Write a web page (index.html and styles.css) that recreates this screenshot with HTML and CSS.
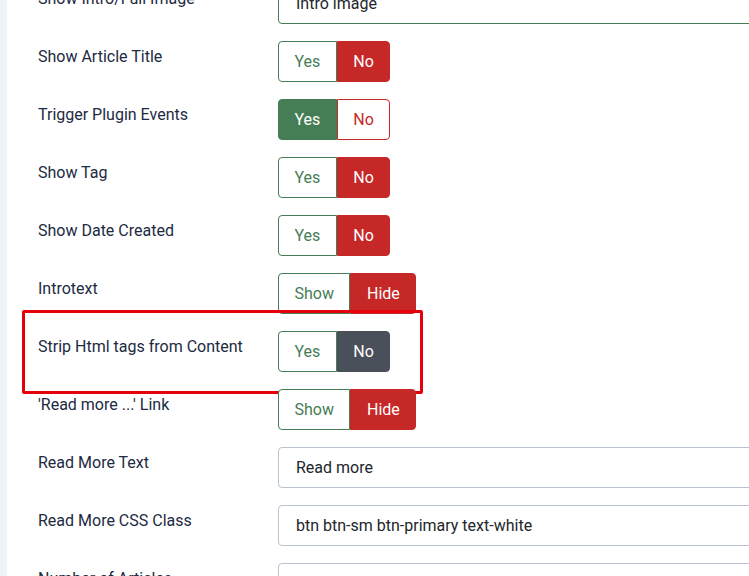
FILE: index.html
```html
<!DOCTYPE html>
<html lang="en">
<head>
<meta charset="utf-8">
<title>Options</title>
<link rel="stylesheet" href="styles.css">
</head>
<body>
<div class="page">
  <div class="form">
    <div class="row">
      <div class="label">Show Intro/Full Image</div>
      <div class="control"><div class="input valid">Intro image</div></div>
    </div>
    <div class="row">
      <div class="label">Show Article Title</div>
      <div class="control"><div class="switch"><span class="seg yes">Yes</span><span class="seg no on">No</span></div></div>
    </div>
    <div class="row">
      <div class="label">Trigger Plugin Events</div>
      <div class="control"><div class="switch"><span class="seg yes on">Yes</span><span class="seg no">No</span></div></div>
    </div>
    <div class="row">
      <div class="label">Show Tag</div>
      <div class="control"><div class="switch"><span class="seg yes">Yes</span><span class="seg no on">No</span></div></div>
    </div>
    <div class="row">
      <div class="label">Show Date Created</div>
      <div class="control"><div class="switch"><span class="seg yes">Yes</span><span class="seg no on">No</span></div></div>
    </div>
    <div class="row">
      <div class="label">Introtext</div>
      <div class="control"><div class="switch"><span class="seg yes">Show</span><span class="seg no on">Hide</span></div></div>
    </div>
    <div class="row highlighted">
      <div class="label">Strip Html tags from Content</div>
      <div class="control"><div class="switch"><span class="seg yes">Yes</span><span class="seg dark on">No</span></div></div>
      <div class="annotation"></div>
    </div>
    <div class="row">
      <div class="label">'Read more ...' Link</div>
      <div class="control"><div class="switch"><span class="seg yes">Show</span><span class="seg no on">Hide</span></div></div>
    </div>
    <div class="row">
      <div class="label">Read More Text</div>
      <div class="control"><div class="input">Read more</div></div>
    </div>
    <div class="row">
      <div class="label">Read More CSS Class</div>
      <div class="control"><div class="input">btn btn-sm btn-primary text-white</div></div>
    </div>
    <div class="row">
      <div class="label">Number of Articles</div>
      <div class="control"><div class="input"></div></div>
    </div>
  </div>
</div>
</body>
</html>
```

FILE: styles.css
```css
html, body {
  margin: 0;
  padding: 0;
  overflow: hidden;
  background: #ffffff;
}

body {
  width: 749px;
  height: 576px;
  font-family: Roboto, "Liberation Sans", Arial, sans-serif;
  font-size: 16px;
  line-height: 24px;
  color: #22262a;
}

.page {
  height: 576px;
  border-left: 7px solid #eef2f9;
  padding-left: 31px;
  overflow: hidden;
}

.form {
  margin-top: -17px;
  display: flex;
  flex-direction: column;
  gap: 17px;
}

.row {
  position: relative;
  display: flex;
  align-items: flex-start;
  height: 41px;
}

.label {
  width: 240px;
  flex: none;
  padding-top: 4px;
  color: #1d2a3f;
}

.control {
  flex: none;
}

.input {
  box-sizing: border-box;
  width: 520px;
  height: 41px;
  padding: 8px 17px;
  border: 1px solid #b9c3cf;
  border-radius: 4px;
  color: #22262a;
  white-space: nowrap;
}

.input.valid {
  border-color: #457d54;
}

.switch {
  display: flex;
  height: 41px;
}

.seg {
  box-sizing: border-box;
  height: 41px;
  padding: 8px 15.5px;
  border: 1px solid;
  background: #ffffff;
}

.seg:first-child {
  border-radius: 4px 0 0 4px;
}

.seg:last-child {
  border-radius: 0 4px 4px 0;
}

.seg.yes {
  color: #457d54;
  border-color: #457d54;
}

.seg.no {
  color: #c52827;
  border-color: #c52827;
}

.seg.dark {
  color: #495057;
  border-color: #495057;
}

.seg.yes.on {
  background: #457d54;
  color: #ffffff;
}

.seg.no.on {
  background: #c52827;
  color: #ffffff;
}

.seg.dark.on {
  background: #4a5059;
  border-color: #4a5059;
  color: #ffffff;
}

.annotation {
  position: absolute;
  left: -16px;
  top: -21px;
  width: 395px;
  height: 78px;
  border: 3px solid #e6000c;
  border-radius: 2px;
  pointer-events: none;
}
```
